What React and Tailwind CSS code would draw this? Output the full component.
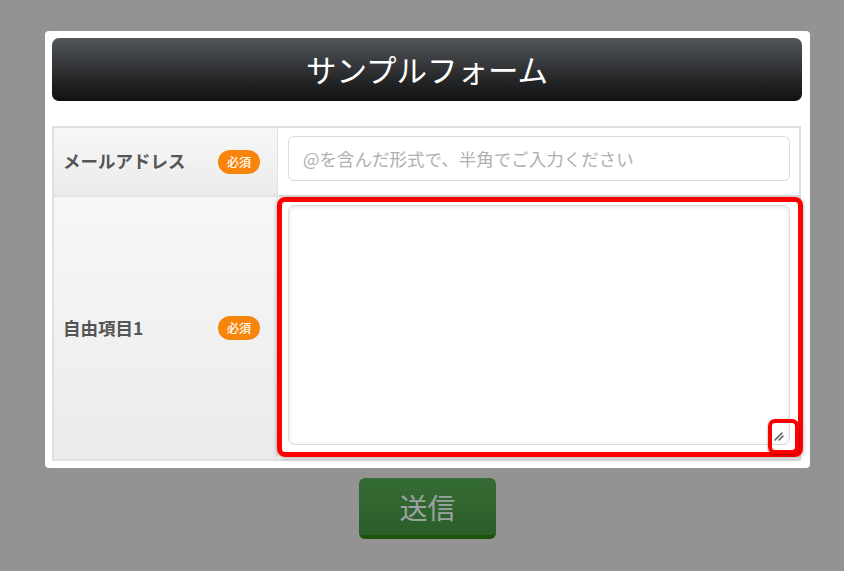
import React from 'react';

const font = { fontFamily: '"Noto Sans CJK JP", "Noto Sans", sans-serif' };

const Badge = () => (
    <span className="inline-flex items-center justify-center w-[42px] h-[24px] rounded-full bg-[#f7850b] text-white text-[12px] font-medium leading-none">
        必須
    </span>
);

const LabelCell = ({ children }) => (
    <div className="w-[224px] shrink-0 flex items-center justify-between pl-[9px] pr-[17px] bg-gradient-to-b from-[#f7f7f7] to-[#ebebeb] border-r border-[#e2e2e2]">
        <span className="text-[17.5px] font-bold text-[#555]">{children}</span>
        <Badge />
    </div>
);

export default function App() {
    return (
        <div className="min-h-[571px] bg-[#939393] pt-[31px] pb-[30px]" style={font}>
            <div className="ml-[45px] w-[765px] bg-white rounded-[4px] pt-[7px] pb-[7px] pl-[7px] pr-[8px]">
                {/* タイトル */}
                <div className="h-[63px] rounded-[7px] bg-gradient-to-b from-[#53575c] to-[#111111] flex items-center justify-center">
                    <h1 className="text-white text-[30.5px] leading-none">サンプルフォーム</h1>
                </div>

                <div className="mt-[25px] border-2 border-[#e0e0e0] mr-[1px]">
                    {/* メール */}
                    <div className="flex h-[69px] border-b-2 border-[#e2e2e2]">
                        <LabelCell>メールアドレス</LabelCell>
                        <div className="flex-1 pl-[10px] pr-[9px] pt-[8px]">
                            <input
                                type="text"
                                placeholder="@を含んだ形式で、半角でご入力ください"
                                className="w-full h-[45px] border border-[#dcdcdc] rounded-[6px] px-[14px] text-[17.5px] placeholder:text-[#b0b0b0] outline-none"
                            />
                        </div>
                    </div>

                    {/* 自由項目 */}
                    <div className="flex h-[262px]">
                        <LabelCell>自由項目1</LabelCell>
                        <div className="flex-1 relative pl-[10px] pr-[9px] pt-[8px] pb-[14px]">
                            <textarea className="w-full h-full block resize-none border border-[#dcdcdc] rounded-[6px] shadow-[inset_0_1px_4px_rgba(0,0,0,0.12)] outline-none" />
                            <svg className="absolute right-[14px] bottom-[17px]" width="12" height="12" viewBox="0 0 12 12">
                                <path d="M2 10 L9 3 M6 10 L10 6" stroke="#555" strokeWidth="1.5" strokeLinecap="round" />
                            </svg>
                            <div className="absolute left-[-1px] top-[0px] right-[-4px] bottom-[2px] border-[5px] border-[#ff0000] rounded-[8px] shadow-[0_1px_4px_rgba(0,0,0,0.35)] pointer-events-none" />
                            <div className="absolute right-[0px] bottom-[5px] w-[31px] h-[35px] border-[4px] border-[#ff0000] rounded-[7px] shadow-[0_1px_3px_rgba(0,0,0,0.35)] pointer-events-none" />
                        </div>
                    </div>
                </div>
            </div>

            <div className="ml-[45px] w-[765px] flex justify-center mt-[10px]">
                <button className="w-[137px] h-[61px] rounded-[6px] bg-gradient-to-b from-[#356b35] to-[#2a5e2a] border-b-[4px] border-[#1c5209] text-[#9aa3a0] text-[28px] leading-none">
                    送信
                </button>
            </div>
        </div>
    );
}
